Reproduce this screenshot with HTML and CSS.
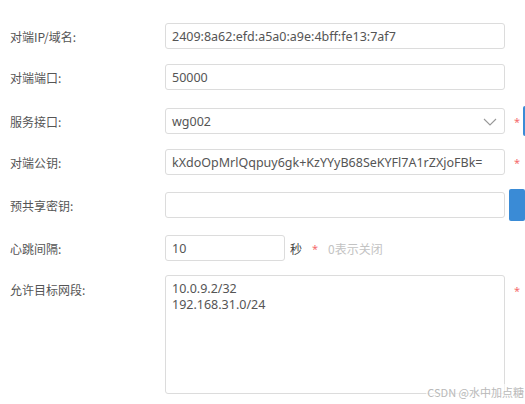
FILE: index.html
```html
<!DOCTYPE html>
<html lang="zh-CN">
<head>
<meta charset="utf-8">
<link rel="stylesheet" href="styles.css">
</head>
<body>
<form class="form">
  <div class="row">
    <label class="label">对端IP/域名:</label>
    <div class="field">2409:8a62:efd:a5a0:a9e:4bff:fe13:7af7</div>
  </div>
  <div class="row">
    <label class="label">对端端口:</label>
    <div class="field">50000</div>
  </div>
  <div class="row row-select">
    <label class="label">服务接口:</label>
    <div class="field select">wg002
      <svg class="chev" width="14" height="8" viewBox="0 0 14 8"><path d="M1 1 L7 7 L13 1" fill="none" stroke="#999" stroke-width="1.1"/></svg>
    </div>
    <span class="req">*</span>
    <span class="btn btn-far"></span>
  </div>
  <div class="row">
    <label class="label">对端公钥:</label>
    <div class="field">kXdoOpMrlQqpuy6gk+KzYYyB68SeKYFl7A1rZXjoFBk=</div>
    <span class="req">*</span>
  </div>
  <div class="row row-loose">
    <label class="label">预共享密钥:</label>
    <div class="field"></div>
    <span class="btn btn-near"></span>
  </div>
  <div class="row row-loose">
    <label class="label">心跳间隔:</label>
    <div class="field short">10</div>
    <span class="unit">秒</span>
    <span class="req req-inline">*</span>
    <span class="hint">0表示关闭</span>
  </div>
  <div class="row row-area">
    <label class="label">允许目标网段:</label>
    <div class="field area">10.0.9.2/32<br>192.168.31.0/24</div>
    <span class="req req-top">*</span>
  </div>
</form>
<div class="watermark">CSDN @水中加点糖</div>
</body>
</html>
```

FILE: styles.css
```css
html, body {
  margin: 0;
  padding: 0;
  background: #fff;
  width: 525px;
  height: 404px;
  overflow: hidden;
  font-family: "Noto Sans", "Noto Sans CJK SC", sans-serif;
  font-size: 12px;
  color: #555;
}

.form {
  padding-top: 23px;
  display: flex;
  flex-direction: column;
  gap: 15px;
}

.row {
  display: flex;
  align-items: center;
  height: 26px;
}

.row-select {
  margin-top: 3px;
}

.row-loose {
  margin-top: 2px;
}

.label {
  width: 155px;
  padding-left: 10px;
  flex: none;
  font-family: "Noto Sans CJK SC", sans-serif;
  color: #555;
}

.field {
  box-sizing: border-box;
  width: 340px;
  height: 26px;
  border: 1px solid #dcdcdc;
  border-radius: 3px;
  padding: 0 6px;
  display: flex;
  align-items: center;
  flex: none;
  color: #555;
  font-size: 12.5px;
  white-space: nowrap;
  overflow: hidden;
}

.select {
  position: relative;
}

.chev {
  position: absolute;
  right: 7px;
  top: 9px;
}

.req {
  color: #f56c6c;
  margin-left: 9px;
  font-size: 11px;
  line-height: 1;
  flex: none;
}

.btn {
  display: block;
  background: #3a8bd6;
  border-radius: 2px;
  flex: none;
}

.btn-far {
  margin-left: 3px;
  width: 10px;
  height: 30px;
}

.btn-near {
  margin-left: 4px;
  width: 16px;
  height: 32px;
}

.short {
  width: 120px;
}

.unit {
  margin-left: 5px;
  color: #444;
  font-family: "Noto Sans CJK SC", sans-serif;
}

.req-inline {
  margin-left: 10px;
}

.hint {
  margin-left: 10px;
  color: #c3c3c3;
  font-family: "Noto Sans CJK SC", sans-serif;
}

.row-area {
  height: 119px;
  align-items: flex-start;
  margin-top: -1px;
}

.row-area .label {
  padding-top: 6px;
}

.area {
  height: 119px;
  align-items: flex-start;
  padding-top: 5px;
  line-height: 16px;
  display: block;
}

.req-top {
  margin-top: 10px;
}

.watermark {
  position: absolute;
  right: 0;
  top: 384px;
  font-family: "Noto Sans CJK SC", sans-serif;
  font-size: 11px;
  color: #b9b9b9;
  background: rgba(255,255,255,0.6);
  padding: 0 1px;
}
```
